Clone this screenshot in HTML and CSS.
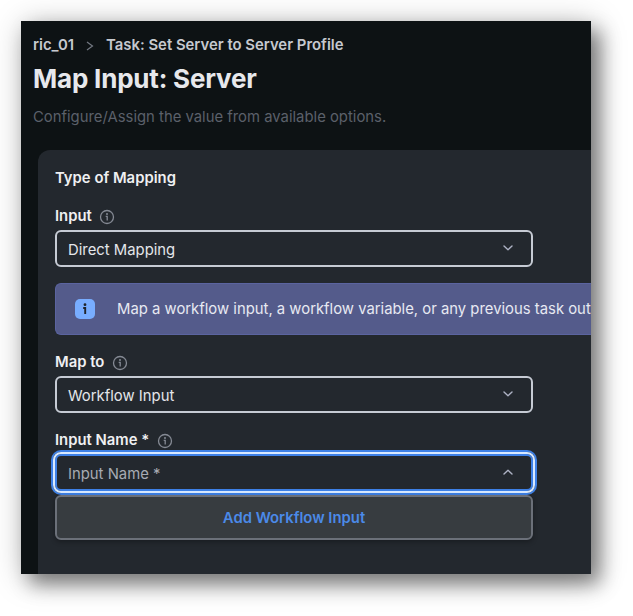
FILE: index.html
```html
<!DOCTYPE html>
<html lang="en">
<head>
<meta charset="utf-8">
<title>Map Input: Server</title>
<link rel="stylesheet" href="styles.css">
</head>
<body>
<svg class="defs" width="0" height="0" aria-hidden="true">
  <symbol id="info" viewBox="0 0 16 16">
    <circle cx="8" cy="8" r="6.5" fill="none" stroke="currentColor" stroke-width="1.3"/>
    <circle cx="8" cy="5" r="1" fill="currentColor"/>
    <path d="M6.7 7.4H8.2V11.4" fill="none" stroke="currentColor" stroke-width="1.3"/>
  </symbol>
  <symbol id="chevron" viewBox="0 0 10 6">
    <path d="M1 1L5 4.8L9 1" fill="none" stroke="currentColor" stroke-width="1.4" stroke-linecap="round" stroke-linejoin="round"/>
  </symbol>
</svg>
<main class="window">
  <header class="page-head">
    <nav class="breadcrumb">
      <span>ric_01</span>
      <svg class="separator" viewBox="0 0 8 10"><path d="M1 1L6.5 5L1 9" fill="none" stroke="currentColor" stroke-width="1.2"/></svg>
      <span>Task: Set Server to Server Profile</span>
    </nav>
    <h1>Map Input: Server</h1>
    <p class="subtitle">Configure/Assign the value from available options.</p>
  </header>
  <section class="card">
    <h2>Type of Mapping</h2>
    <div class="field">
      <div class="label"><span>Input</span><svg class="info"><use href="#info"/></svg></div>
      <div class="select"><span>Direct Mapping</span><svg class="chevron"><use href="#chevron"/></svg></div>
    </div>
    <div class="banner">
      <svg class="badge" viewBox="0 0 20 20"><rect width="20" height="20" rx="5" fill="#78adff"/><circle cx="10" cy="5.7" r="1.4" fill="#20242b"/><path d="M8.2 9H10.2V15" fill="none" stroke="#20242b" stroke-width="1.9"/></svg>
      <span class="message">Map a workflow input, a workflow variable, or any previous task out</span>
    </div>
    <div class="field">
      <div class="label"><span>Map to</span><svg class="info"><use href="#info"/></svg></div>
      <div class="select"><span>Workflow Input</span><svg class="chevron"><use href="#chevron"/></svg></div>
    </div>
    <div class="field">
      <div class="label"><span>Input Name *</span><svg class="info"><use href="#info"/></svg></div>
      <div class="select focused"><span>Input Name *</span><svg class="chevron up"><use href="#chevron"/></svg></div>
      <div class="menu"><span>Add Workflow Input</span></div>
    </div>
  </section>
</main>
</body>
</html>
```
FILE: styles.css
```css
* { box-sizing: border-box; }
body {
  margin: 0;
  padding: 21px;
  height: 616px;
  overflow: hidden;
  background: #fff;
  font-family: Inter, "Liberation Sans", sans-serif;
  font-size: 14.85px;
  color: #e4e6ea;
}
.defs { display: block; position: absolute; }
.window {
  width: 570px;
  height: 553px;
  background: #0d1214;
  box-shadow: 9px 10px 18px rgba(0,0,0,.42), 3px 4px 30px rgba(0,0,0,.28);
  display: flex;
  flex-direction: column;
  overflow: hidden;
}
.page-head { height: 129px; padding: 14px 0 0 12px; flex: none; }
.breadcrumb {
  display: flex;
  align-items: center;
  height: 20px;
  font-size: 14.88px;
  font-weight: 600;
  color: #c6c9cf;
  white-space: nowrap;
}
.separator { width: 8px; height: 10px; margin: 1px 12px 0 12px; color: #737983; }
h1 { margin: 8px 0 0; font-size: 26px; line-height: 32px; font-weight: 700; letter-spacing: -0.2px; color: #e7e8ec; white-space: nowrap; width: max-content; }
.subtitle { margin: 12px 0 0; line-height: 20px; color: #5b606a; white-space: nowrap; width: max-content; }
.card {
  flex: 1;
  margin-left: 17px;
  padding: 18px 0 0 17px;
  border-radius: 12px 0 0 0;
  background: #23282e;
}
h2 { margin: 0; font-size: 14.85px; line-height: 20px; font-weight: 600; color: #eff0f2; width: max-content; }
.field { width: 478px; margin-top: 17px; }
.label { display: flex; align-items: center; gap: 7.6px; height: 20px; padding-top: 2px; font-size: 14.85px; font-weight: 600; color: #eff0f2; }
.info { width: 16px; height: 16px; color: #858a94; margin-top: 2px; }
.select {
  display: flex;
  align-items: center;
  justify-content: space-between;
  height: 37px;
  margin-top: 5px;
  padding: 2px 18px 0 11px;
  border: 2px solid #c6cbd4;
  border-radius: 6px;
}
.chevron { width: 10px; height: 6px; margin-top: -3px; color: #adb2c4; }
.up { transform: rotate(180deg); }
.banner {
  display: flex;
  align-items: center;
  height: 52px;
  margin-top: 16px;
  padding-left: 19px;
  border: 1px solid #5b64a0;
  border-right: 0;
  border-radius: 6px 0 0 6px;
  background: #545b8b;
  overflow: hidden;
  white-space: nowrap;
}
.badge { width: 20px; height: 20px; flex: none; margin-right: 22px; }
.message { font-size: 14.85px; color: #e7e9f2; }
.banner + .field, .field + .field { margin-top: 16px; }
.focused {
  border-color: #d8e9ff;
  box-shadow: 0 0 0 2px #3d80e6, inset 0 0 0 2px #3d80e6;
  height: 41px;
  width: 482px;
  margin: 3px -2px 0;
  padding: 2px 20px 0 13px;
  border-radius: 8px;
  color: #a7abb3;
}
.menu {
  display: flex;
  align-items: center;
  justify-content: center;
  height: 45px;
  margin-top: 2px;
  border: 2px solid #6b7079;
  border-radius: 6px;
  background: #373c40;
  box-shadow: 0 2px 5px rgba(0,0,0,.3);
  font-weight: 600;
  color: #4b8ae8;
}
```
